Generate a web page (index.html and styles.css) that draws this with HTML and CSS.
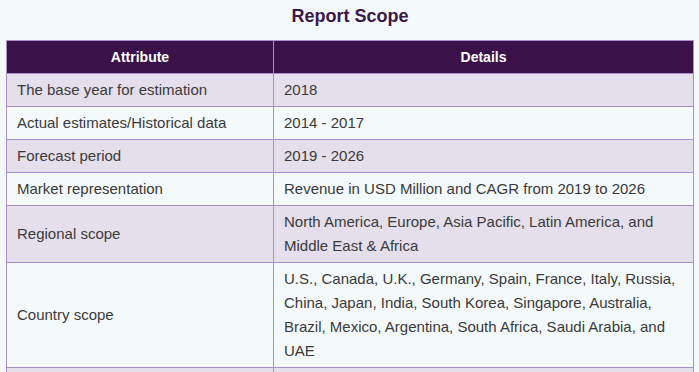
FILE: index.html
```html
<!DOCTYPE html>
<html>
<head>
<meta charset="utf-8">
<link rel="stylesheet" href="styles.css">
</head>
<body>
<div class="page">
  <h2 class="title">Report Scope</h2>
  <table class="scope">
    <thead>
      <tr><th class="c1">Attribute</th><th>Details</th></tr>
    </thead>
    <tbody>
      <tr><td>The base year for estimation</td><td>2018</td></tr>
      <tr><td>Actual estimates/Historical data</td><td>2014 - 2017</td></tr>
      <tr><td>Forecast period</td><td>2019 - 2026</td></tr>
      <tr><td>Market representation</td><td>Revenue in USD Million and CAGR from 2019 to 2026</td></tr>
      <tr><td>Regional scope</td><td>North America, Europe, Asia Pacific, Latin America, and Middle East &amp; Africa</td></tr>
      <tr><td>Country scope</td><td>U.S., Canada, U.K., Germany, Spain, France, Italy, Russia, China, Japan, India, South Korea, Singapore, Australia, Brazil, Mexico, Argentina, South Africa, Saudi Arabia, and UAE</td></tr>
      <tr class="empty"><td></td><td></td></tr>
    </tbody>
  </table>
</div>
</body>
</html>
```
FILE: styles.css
```css
html, body {
  margin: 0;
  padding: 0;
  background: #f4f9fc;
}
.page {
  padding: 0 5px 0 6px;
  font-family: "Liberation Sans", Arial, sans-serif;
}
.title {
  margin: 0;
  padding-top: 5px;
  height: 40px;
  box-sizing: border-box;
  text-align: center;
  font-size: 18px;
  line-height: 22px;
  font-weight: bold;
  color: #3a1848;
}
.scope {
  width: 688px;
  border-collapse: collapse;
  table-layout: fixed;
}
.scope th, .scope td {
  border: 1px solid #a98fd2;
}
.scope th {
  background: #3a1148;
  color: #fff;
  font-size: 14px;
  font-weight: bold;
  height: 32px;
  padding: 0;
  text-align: center;
}
.scope th.c1 {
  width: 266px;
}
.scope td {
  padding: 4px 10px;
  font-size: 15px;
  line-height: 24px;
  color: #3a3a3a;
  vertical-align: middle;
}
.scope tbody tr:nth-child(odd) td {
  background: #e5dfeb;
}
.scope tbody tr:nth-child(even) td {
  background: #f4f9fc;
}
.scope tr.empty td {
  height: 24px;
}
```
